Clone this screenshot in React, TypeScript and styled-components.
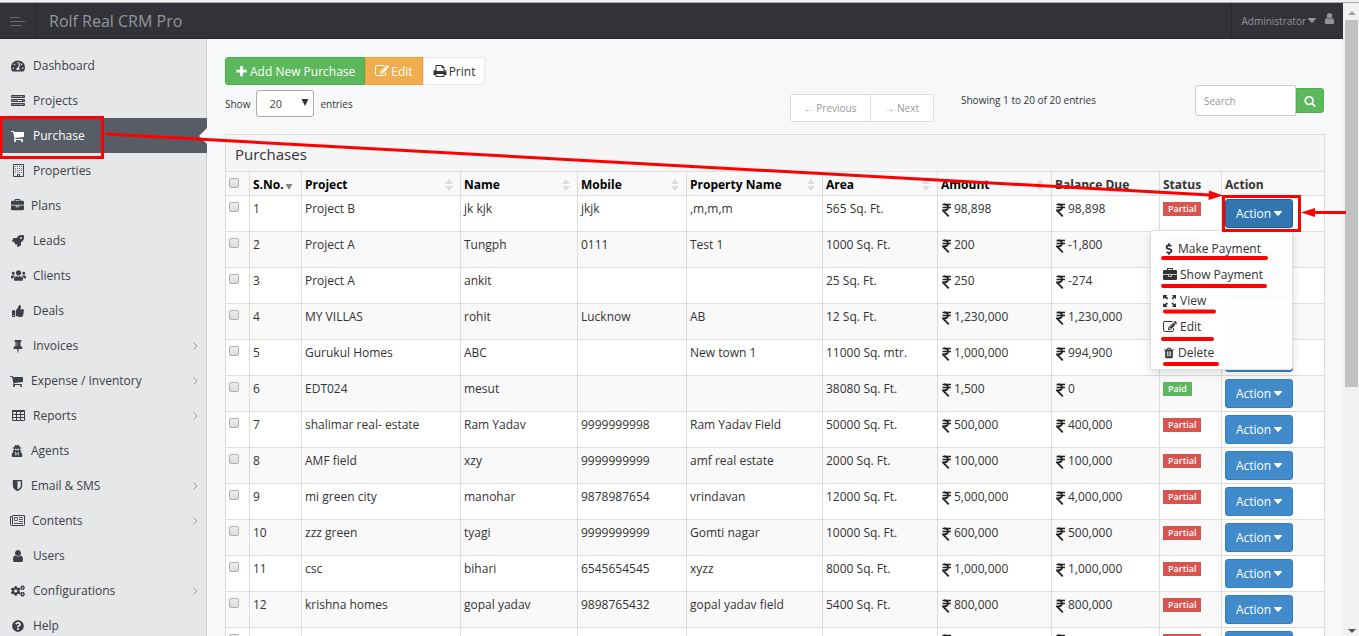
import React from "react";
import styled, { createGlobalStyle, css } from "styled-components";
import {
  FaRocket,
  FaUsers,
  FaThumbsUp,
  FaUserSecret,
  FaCogs,
  FaQuestionCircle,
  FaTachometerAlt,
  FaDollarSign,
} from "react-icons/fa";

const FONT = '"Open Sans", "Noto Sans", "Liberation Sans", sans-serif';

const GlobalStyle = createGlobalStyle`
  *, *::before, *::after { box-sizing: border-box; }
  body {
    margin: 0;
    overflow: hidden;
    background: #f7f8fa;
    color: #333;
    font-family: ${FONT};
    font-size: 12px;
    line-height: 18px;
  }
  button, input, select { font-family: inherit; font-size: inherit; }
  a { color: inherit; text-decoration: none; }
  svg { flex: none; }
`;

/* ---------- icons ---------- */

const PATHS = {
  cart: "M640 1536q0 52-38 90t-90 38-90-38-38-90 38-90 90-38 90 38 38 90zm896 0q0 52-38 90t-90 38-90-38-38-90 38-90 90-38 90 38 38 90zm128-1088v512q0 24-16.5 42.5t-40.5 21.5l-1044 122q13 60 13 70 0 16-24 64h920q26 0 45 19t19 45-19 45-45 19h-1024q-26 0-45-19t-19-45q0-11 8-31.5t16-36 21.5-40 15.5-29.5l-177-823h-204q-26 0-45-19t-19-45 19-45 45-19h256q16 0 28.5 6.5t19.5 15.5 13 24.5 8 26 5.5 29.5 4.5 26h1201q26 0 45 19t19 45z",
  user: "M1536 1399q0 109-62.5 187t-150.5 78h-854q-88 0-150.5-78t-62.5-187q0-85 8.5-160.5t31.5-152 58.5-131 94-89 134.5-34.5q131 128 313 128t313-128q76 0 134.5 34.5t94 89 58.5 131 31.5 152 8.5 160.5zm-256-887q0 159-112.5 271.5t-271.5 112.5-271.5-112.5-112.5-271.5 112.5-271.5 271.5-112.5 271.5 112.5 112.5 271.5z",
  plus: "M1600 736v192q0 40-28 68t-68 28h-416v416q0 40-28 68t-68 28h-192q-40 0-68-28t-28-68v-416h-416q-40 0-68-28t-28-68v-192q0-40 28-68t68-28h416v-416q0-40 28-68t68-28h192q40 0 68 28t28 68v416h416q40 0 68 28t28 68z",
  search: "M1216 832q0-185-131.5-316.5t-316.5-131.5-316.5 131.5-131.5 316.5 131.5 316.5 316.5 131.5 316.5-131.5 131.5-316.5zm512 832q0 52-38 90t-90 38q-54 0-90-38l-343-342q-179 124-399 124-143 0-273.5-55.5t-225-150-150-225-55.5-273.5 55.5-273.5 150-225 225-150 273.5-55.5 273.5 55.5 225 150 150 225 55.5 273.5q0 220-124 399l343 343q37 37 37 90z",
  edit: "M888 1184l116-116-152-152-116 116v56h96v96h56zm440-720q-16-16-33 1l-350 350q-17 17-1 33t33-1l350-350q17-17 1-33zm80 594v190q0 119-84.5 203.5t-203.5 84.5h-832q-119 0-203.5-84.5t-84.5-203.5v-832q0-119 84.5-203.5t203.5-84.5h832q63 0 117 25 15 7 18 23 3 17-9 29l-49 49q-14 14-32 8-23-6-45-6h-832q-66 0-113 47t-47 113v832q0 66 47 113t113 47h832q66 0 113-47t47-113v-126q0-13 9-22l64-64q15-15 35-7t20 29zm-96-738l288 288-672 672h-288v-288zm444 132l-92 92-288-288 92-92q28-28 68-28t68 28l152 152q28 28 28 68t-28 68z",
  print: "M448 1536h896v-256h-896v256zm0-640h896v-384h-160q-40 0-68-28t-28-68v-160h-640v640zm1152 64q0-26-19-45t-45-19-45 19-19 45 19 45 45 19 45-19 19-45zm128 0v416q0 13-9.5 22.5t-22.5 9.5h-224v160q0 40-28 68t-68 28h-960q-40 0-68-28t-28-68v-160h-224q-13 0-22.5-9.5t-9.5-22.5v-416q0-79 56.5-135.5t135.5-56.5h64v-544q0-40 28-68t68-28h672q40 0 88 20t76 48l152 152q28 28 48 76t20 88v256h64q79 0 135.5 56.5t56.5 135.5z",
  shield: "M1344 960v-640h-448v1137q119-63 213-137 235-184 235-360zm192-768v768q0 86-33.5 170.5t-83 150-118 127.5-126.5 103-121 77.5-89.5 49.5-42.5 20q-12 6-26 6t-26-6q-16-7-42.5-20t-89.5-49.5-121-77.5-126.5-103-118-127.5-83-150-33.5-170.5v-768q0-26 19-45t45-19h1152q26 0 45 19t19 45z",
  pin: "M800 864v-448q0-14-9-23t-23-9-23 9-9 23v448q0 14 9 23t23 9 23-9 9-23zm672 352q0 26-19 45t-45 19h-429l-51 483q-2 12-10.5 20.5t-20.5 8.5h-1q-27 0-32-27l-76-485h-404q-26 0-45-19t-19-45q0-123 78.5-221.5t177.5-98.5v-512q-52 0-90-38t-38-90 38-90 90-38h640q52 0 90 38t38 90-38 90-90 38v512q99 0 177.5 98.5t78.5 221.5z",
  briefcase: "M640 256h512v-128h-512v128zm1152 640v480q0 66-47 113t-113 47h-1472q-66 0-113-47t-47-113v-480h672v160q0 26 19 45t45 19h320q26 0 45-19t19-45v-160h672zm-768 0v128h-256v-128h256zm768-480v384h-1792v-384q0-66 47-113t113-47h352v-160q0-40 28-68t68-28h576q40 0 68 28t28 68v160h352q66 0 113 47t47 113z",
  trash: "M704 1376v-704q0-14-9-23t-23-9h-64q-14 0-23 9t-9 23v704q0 14 9 23t23 9h64q14 0 23-9t9-23zm256 0v-704q0-14-9-23t-23-9h-64q-14 0-23 9t-9 23v704q0 14 9 23t23 9h64q14 0 23-9t9-23zm256 0v-704q0-14-9-23t-23-9h-64q-14 0-23 9t-9 23v704q0 14 9 23t23 9h64q14 0 23-9t9-23zm-544-992h448l-48-117q-7-9-17-11h-317q-10 2-17 11zm928 32v64q0 14-9 23t-23 9h-96v948q0 83-47 143.5t-113 60.5h-832q-66 0-113-58.5t-47-141.5v-952h-96q-14 0-23-9t-9-23v-64q0-14 9-23t23-9h309l70-167q15-37 54-63t79-26h320q40 0 79 26t54 63l70 167h309q14 0 23 9t9 23z",
};

function Glyph({ name, size = 14 }: { name: keyof typeof PATHS; size?: number }) {
  return (
    <svg width={size} height={size} viewBox="0 0 1792 1792" fill="currentColor" aria-hidden="true">
      <path d={PATHS[name]} />
    </svg>
  );
}

const TableIcon = () => (
  <svg width="13" height="11" viewBox="0 0 13 11" fill="none" stroke="currentColor" aria-hidden="true">
    <path d="M.5.500h12v10H.5zM.5 1.500h12M4.500 1v9M8.500 1v9M0 4.500h13M0 7.500h13" />
  </svg>
);

const ServerIcon = () => (
  <svg width="14" height="12" viewBox="0 0 14 12" fill="none" stroke="currentColor" aria-hidden="true">
    <path d="M.5.500h13v2H.5zM.5 4.500h13v2H.5zM.5 8.500h13v2H.5z" />
    <path strokeOpacity=".5" d="M1 1.500h9M1 5.500h6M1 9.500h9" />
    <path strokeWidth="2" d="M11 1.500h1.500M11 5.500h1.500M11 9.500h1.500" />
  </svg>
);

const BuildingIcon = () => (
  <svg width="11" height="13" viewBox="0 0 11 13" fill="none" stroke="currentColor" aria-hidden="true">
    <path d="M.5.500h10v12H.5z" />
    <path strokeDasharray="1 1" strokeOpacity=".7" d="M2 2.500h7M2 4.500h7M2 6.500h7M2 8.500h7" />
    <path d="M4.500 12.500v-2h2v2" />
  </svg>
);

const NewspaperIcon = () => (
  <svg width="15" height="11" viewBox="0 0 15 11" fill="none" stroke="currentColor" aria-hidden="true">
    <path d="M2.500.500h12v9q0 1-1 1h-12q-1 0-1-1v-8h2v8" />
    <path d="M4.500 2.500h3v3h-3zM9 2.500h4M9 4.500h4M9 6.500h4M4 8.500h9" strokeOpacity=".85" />
  </svg>
);

const FullscreenIcon = () => (
  <svg width="14" height="14" viewBox="0 0 14 14" fill="currentColor" aria-hidden="true">
    <path d="M0 1h4.500L3.200 2.300 5.200 4.300 4 5.500 1.700 3.700 0 5.200zM13 1v4.200L11.600 3.800 9.600 5.500 8.500 4.400l1.800-2L9 1zM0 13V9l1.500 1.200L3.700 8.400 5 9.600 3.200 11.600 4.500 13zM13 13H9l1.300-1.400L8.400 9.600 9.600 8.400l2 1.800L13 9z" />
  </svg>
);

const Rupee = () => (
  <svg width="9" height="14" viewBox="0 0 9 14" fill="none" stroke="#222" aria-hidden="true">
    <path strokeWidth="1.600" d="M.5 1.500H9M.5 4.500H9" />
    <path strokeWidth="1.800" d="M2 1.500C7.500 1 7.500 7.800 1 7.500L6.800 13.300" />
  </svg>
);

const Caret = () => (
  <svg width="8" height="5" viewBox="0 0 8 5" fill="currentColor" aria-hidden="true">
    <path d="M0.500 0h7q.8.300.3 1L4.600 4.500q-.6.500-1.200 0L.2 1Q-.3.300.500 0z" />
  </svg>
);

const Chevron = () => (
  <svg width="5" height="8" viewBox="0 0 5 8" fill="none" stroke="#999" aria-hidden="true">
    <path d="M0.700 0.700 4 4 0.700 7.300" />
  </svg>
);

/* ---------- frame ---------- */

const Page = styled.div`
  position: relative;
  display: flex;
  flex-direction: column;
  height: 100vh;
  overflow: hidden;
`;

const TopEdge = styled.div`
  flex: none;
  height: 3px;
  background: #f1f1f1;
  border-bottom: 1px solid #aaa;
`;

const Frame = styled.div`
  display: flex;
  flex: 1;
  min-height: 0;
`;

const Shell = styled.div`
  display: flex;
  flex-direction: column;
  flex: 1;
  min-width: 0;
`;

const Header = styled.header`
  display: flex;
  flex: none;
  align-items: center;
  height: 36px;
  background: #323338;
  border-bottom: 1px solid #28282c;
  color: #949599;
`;

const MenuToggle = styled.button`
  width: 36px;
  height: 100%;
  padding: 2px 0 0;
  border: 0;
  border-right: 1px solid #27282b;
  background: none;
  color: #6b6c70;
`;

const Brand = styled.h1`
  flex: 1;
  margin: 0 0 0 13px;
  font-size: 16px;
  font-weight: 400;
`;

const Account = styled.a`
  display: flex;
  align-items: center;
  gap: 2px;
  height: 100%;
  padding: 0 7px 0 9px;
  border-left: 1px solid #27282b;
  font-size: 10px;
  > svg:last-child { margin: 0 0 4px 5px; }
`;

const Body = styled.div`
  display: flex;
  flex: 1;
  min-height: 0;
`;

const Scrollbar = styled.div`
  display: flex;
  flex: none;
  flex-direction: column;
  align-items: center;
  justify-content: space-between;
  width: 16px;
  padding: 8px 0 3px 1px;
  background: #f1f1f1;
`;

const Thumb = styled.div`
  flex: none;
  width: 13px;
  height: 59%;
  margin: 5px 0 auto;
  background: #c1c1c1;
`;

/* ---------- sidebar ---------- */

const Sidebar = styled.nav`
  flex: none;
  width: 207px;
  padding-top: 9px;
  background: #e5e7e9;
  box-shadow: inset -1px 0 #cccfd2;
`;

const NavLink = styled.a<{ $active?: boolean }>`
  display: flex;
  align-items: center;
  height: 35px;
  padding: 0 9px 0 10px;
  font-size: 12px;
  color: #3d4048;
  ${(p) =>
    p.$active &&
    css`
      padding-right: 0;
      background: #575d67;
      color: #fff;
    `}
`;

const NavIcon = styled.span<{ $width: number }>`
  display: flex;
  justify-content: center;
  width: ${(p) => p.$width}px;
  margin-right: 7px;
`;

const NavLabel = styled.span`
  flex: 1;
`;

type NavEntry = { label: string; icon: React.ReactNode; width?: number; sub?: boolean; active?: boolean };

const NAV: NavEntry[] = [
  { label: "Dashboard", icon: <FaTachometerAlt size={14} /> },
  { label: "Projects", icon: <ServerIcon /> },
  { label: "Purchase", icon: <Glyph name="cart" />, active: true },
  { label: "Properties", icon: <BuildingIcon /> },
  { label: "Plans", icon: <Glyph name="briefcase" size={13} />, width: 14 },
  { label: "Leads", icon: <FaRocket size={12} /> },
  { label: "Clients", icon: <FaUsers size={15} /> },
  { label: "Deals", icon: <FaThumbsUp size={12} /> },
  { label: "Invoices", icon: <Glyph name="pin" />, sub: true },
  { label: "Expense / Inventory", icon: <Glyph name="cart" />, width: 14, sub: true },
  { label: "Reports", icon: <TableIcon />, sub: true },
  { label: "Agents", icon: <FaUserSecret size={12} />, width: 14 },
  { label: "Email & SMS", icon: <Glyph name="shield" size={13} />, width: 14, sub: true },
  { label: "Contents", icon: <NewspaperIcon />, width: 15, sub: true },
  { label: "Users", icon: <Glyph name="user" /> },
  { label: "Configurations", icon: <FaCogs size={14} />, sub: true },
  { label: "Help", icon: <FaQuestionCircle size={12} /> },
];

/* ---------- content ---------- */

const Main = styled.main`
  flex: 1;
  min-width: 0;
  padding: 18px 18px 0;
`;

const Controls = styled.div`
  display: flex;
  justify-content: space-between;
  height: 77px;
`;

const ControlsLeft = styled.div`
  display: flex;
  flex-direction: column;
  gap: 5px;
`;

const ButtonGroup = styled.div`
  display: flex;
`;

const ToolButton = styled.button<{ $bg: string; $border: string; $color?: string }>`
  display: flex;
  align-items: center;
  gap: 2px;
  height: 28px;
  padding: 0 9px;
  border: 1px solid ${(p) => p.$border};
  background: ${(p) => p.$bg};
  color: ${(p) => p.$color ?? "#fff"};
  font-size: 12px;
  white-space: nowrap;
  &:first-child { border-radius: 3px 0 0 3px; }
  &:last-child { border-radius: 0 3px 3px 0; }
`;

const LengthLabel = styled.label`
  display: flex;
  align-items: center;
  gap: 6px;
  font-size: 10px;
`;

const SelectWrap = styled.span`
  position: relative;
  display: flex;
  svg { position: absolute; right: 5px; top: 9px; pointer-events: none; }
`;

const LengthSelect = styled.select`
  appearance: none;
  width: 58px;
  height: 27px;
  padding: 0 12px;
  border: 1px solid #aaa;
  border-radius: 3px;
  background: #fff;
  color: #444;
  font-size: 11px;
`;

const ControlsRight = styled.div`
  display: flex;
  align-items: flex-start;
  margin: 28px 1px 0 0;
`;

const Pager = styled.div`
  display: flex;
  margin: 9px 27px 0 0;
`;

const PagerButton = styled.button`
  height: 28px;
  padding: 0 14px 0 13px;
  border: 1px solid #ddd;
  background: #fff;
  color: #999;
  font-size: 10px;
  &:first-child { border-radius: 3px 0 0 3px; }
  &:last-child { margin-left: -1px; border-radius: 0 3px 3px 0; }
`;

const Info = styled.p`
  width: 234px;
  margin: 6px 0 0;
  font-size: 10px;
`;

const SearchForm = styled.form`
  display: flex;
  align-items: center;
`;

const SearchInput = styled.input`
  width: 101px;
  height: 31px;
  padding: 0 8px;
  border: 1px solid #ccc;
  border-radius: 3px 0 0 3px;
  background: #fff;
  font-size: 10px;
  &::placeholder { color: #999; }
`;

const SearchButton = styled.button`
  display: flex;
  align-items: center;
  justify-content: center;
  width: 28px;
  height: 25px;
  padding: 0;
  border: 1px solid #4cae4c;
  border-radius: 0 3px 3px 0;
  background: #5cb85c;
  color: #fff;
`;

const PanelTitle = styled.h2`
  height: 37px;
  margin: 0;
  padding: 0 9px;
  border: 1px solid #ddd;
  border-bottom: 0;
  background: #f5f5f5;
  font-size: 15px;
  font-weight: 400;
  line-height: 38px;
`;

const Table = styled.table`
  width: 100%;
  border-collapse: collapse;
  table-layout: fixed;
`;

const Th = styled.th<{ $plain?: boolean }>`
  height: 24px;
  padding: 2px 7px 0 3px;
  border: 1px solid #ddd;
  background: #f9f9f9;
  color: ${(p) => (p.$plain ? "#333" : "#000")};
  font-size: 12px;
  font-weight: 700;
  text-align: left;
  white-space: nowrap;
`;

const ThInner = styled.span<{ $spread?: boolean }>`
  display: flex;
  align-items: center;
  justify-content: ${(p) => (p.$spread ? "space-between" : "flex-start")};
  gap: 1px;
`;

const Row = styled.tr`
  height: 36px;
  background: #fff;
  &:nth-child(even) { background: #f9f9f9; }
`;

const Td = styled.td`
  padding: 4px 3px 0;
  border: 1px solid #ddd;
  vertical-align: top;
  white-space: nowrap;
`;

const CheckTd = styled(Td)`
  padding-top: 6px;
  line-height: 10px;
`;

const ActionTd = styled(Td)`
  padding: 3px;
`;

const Check = styled.input`
  appearance: none;
  display: block;
  width: 10px;
  height: 10px;
  margin: 0;
  border: 1px solid #b0b0b0;
  border-radius: 2px;
  background: linear-gradient(#eee, #dcdcdc);
`;

const HeadCheck = styled(Check)`
  margin-bottom: 4px;
`;

const Money = styled.span`
  display: flex;
  align-items: center;
  gap: 3px;
  padding-left: 1px;
  svg { margin-top: 2px; }
`;

const Badge = styled.span<{ $paid: boolean }>`
  display: block;
  width: fit-content;
  height: 14px;
  margin-top: 2px;
  padding: 0 5px;
  background: ${(p) => (p.$paid ? "#5cb85c" : "#d9534f")};
  color: #fff;
  font-size: 9px;
  font-weight: 600;
  line-height: 14px;
`;

const ActionWrap = styled.div`
  position: relative;
  width: 68px;
`;

const ActionButton = styled.button<{ $open?: boolean }>`
  display: flex;
  align-items: center;
  justify-content: center;
  gap: 3px;
  width: 68px;
  height: 29px;
  padding: 0 0 1px;
  border: 1px solid ${(p) => (p.$open ? "#285e8e" : "#357ebd")};
  border-radius: 3px;
  background: ${(p) => (p.$open ? "#3276b1" : "#428bca")};
  color: #fff;
  font-size: 12px;
`;

const Menu = styled.ul`
  position: absolute;
  z-index: 2;
  top: 31px;
  right: 0;
  width: 143px;
  margin: 0;
  padding: 5px 0 3px;
  border: 1px solid #ddd;
  border-radius: 3px;
  background: rgba(255, 255, 255, 0.98);
  box-shadow: 0 3px 8px rgba(0, 0, 0, 0.15);
  list-style: none;
`;

const MenuItem = styled.a`
  display: flex;
  align-items: center;
  gap: 3px;
  height: 26px;
  padding: 0 12px;
  font-size: 12px;
`;

const Annotations = styled.svg`
  position: absolute;
  z-index: 5;
  top: 0;
  left: 0;
  pointer-events: none;
`;

type Purchase = [string, string, string, string, string, string, string, "Partial" | "Paid"];

const ROWS: Purchase[] = [
  ["Project B", "jk kjk", "jkjk", ",m,m,m", "565 Sq. Ft.", "98,898", "98,898", "Partial"],
  ["Project A", "Tungph", "0111", "Test 1", "1000 Sq. Ft.", "200", "-1,800", "Partial"],
  ["Project A", "ankit", "", "", "25 Sq. Ft.", "250", "-274", "Partial"],
  ["MY VILLAS", "rohit", "Lucknow", "AB", "12 Sq. Ft.", "1,230,000", "1,230,000", "Partial"],
  ["Gurukul Homes", "ABC", "", "New town 1", "11000 Sq. mtr.", "1,000,000", "994,900", "Partial"],
  ["EDT024", "mesut", "", "", "38080 Sq. Ft.", "1,500", "0", "Paid"],
  ["shalimar real- estate", "Ram Yadav", "9999999998", "Ram Yadav Field", "50000 Sq. Ft.", "500,000", "400,000", "Partial"],
  ["AMF field", "xzy", "9999999999", "amf real estate", "2000 Sq. Ft.", "100,000", "100,000", "Partial"],
  ["mi green city", "manohar", "9878987654", "vrindavan", "12000 Sq. Ft.", "5,000,000", "4,000,000", "Partial"],
  ["zzz green", "tyagi", "9999999999", "Gomti nagar", "10000 Sq. Ft.", "600,000", "500,000", "Partial"],
  ["csc", "bihari", "6545654545", "xyzz", "8000 Sq. Ft.", "1,000,000", "1,000,000", "Partial"],
  ["krishna homes", "gopal yadav", "9898765432", "gopal yadav field", "5400 Sq. Ft.", "800,000", "800,000", "Partial"],
  ["", "", "", "", "", "", "", "Partial"],
];

const HEADINGS = ["Project", "Name", "Mobile", "Property Name", "Area", "Amount"];
const WIDTHS = [24, 52, 0, 117, 109, 136, 115, 114, 108, 62, 103];

const SortIcon = () => (
  <svg width="8" height="12" viewBox="0 0 8 12" fill="#ddd" aria-hidden="true">
    <path d="M4 0l4 5H0zM4 12L0 7h8z" />
  </svg>
);

function ActionMenu() {
  return (
    <Menu>
      <li><MenuItem href="#pay"><FaDollarSign size={12} />Make Payment</MenuItem></li>
      <li><MenuItem href="#payments"><Glyph name="briefcase" />Show Payment</MenuItem></li>
      <li><MenuItem href="#view"><FullscreenIcon />View</MenuItem></li>
      <li><MenuItem href="#edit"><Glyph name="edit" />Edit</MenuItem></li>
      <li><MenuItem href="#delete"><Glyph name="trash" size={12} />Delete</MenuItem></li>
    </Menu>
  );
}

export default function App() {
  return (
    <Page>
      <GlobalStyle />
      <TopEdge />
      <Frame>
        <Shell>
          <Header>
            <MenuToggle aria-label="Toggle menu">
              <svg width="15" height="9" viewBox="0 0 15 9" stroke="currentColor" aria-hidden="true">
                <path d="M0 .5h10M0 4.500h15M0 8.500h12" />
              </svg>
            </MenuToggle>
            <Brand>Rolf Real CRM Pro</Brand>
            <Account href="#account">
              Administrator
              <Caret />
              <Glyph name="user" size={13} />
            </Account>
          </Header>
          <Body>
            <Sidebar>
              {NAV.map((n) => (
                <NavLink key={n.label} href="#nav" $active={n.active}>
                  <NavIcon $width={n.width ?? 16}>{n.icon}</NavIcon>
                  <NavLabel>{n.label}</NavLabel>
                  {n.sub && <Chevron />}
                  {n.active && (
                    <svg width="8" height="16" viewBox="0 0 8 16" fill="#f7f8fa" aria-hidden="true">
                      <path d="M8 0v16L0 8z" />
                    </svg>
                  )}
                </NavLink>
              ))}
            </Sidebar>
            <Main>
              <Controls>
                <ControlsLeft>
                  <ButtonGroup>
                    <ToolButton $bg="#5cb85c" $border="#4cae4c"><Glyph name="plus" size={13} />Add New Purchase</ToolButton>
                    <ToolButton $bg="#f0ad4e" $border="#eea236"><Glyph name="edit" />Edit</ToolButton>
                    <ToolButton $bg="#fff" $border="#e8e8e8" $color="#333"><Glyph name="print" />Print</ToolButton>
                  </ButtonGroup>
                  <LengthLabel>
                    Show
                    <SelectWrap>
                      <LengthSelect defaultValue="20">
                        <option>20</option>
                        <option>50</option>
                      </LengthSelect>
                      <svg width="8" height="7" viewBox="0 0 8 7" fill="#333" aria-hidden="true"><path d="M0.500 0h7L4 7z" /></svg>
                    </SelectWrap>
                    entries
                  </LengthLabel>
                </ControlsLeft>
                <ControlsRight>
                  <Pager>
                    <PagerButton>← Previous</PagerButton>
                    <PagerButton>→ Next</PagerButton>
                  </Pager>
                  <Info>Showing 1 to 20 of 20 entries</Info>
                  <SearchForm>
                    <SearchInput placeholder="Search" aria-label="Search" />
                    <SearchButton type="button" aria-label="Search"><Glyph name="search" size={12} /></SearchButton>
                  </SearchForm>
                </ControlsRight>
              </Controls>
              <PanelTitle>Purchases</PanelTitle>
              <Table>
                <colgroup>
                  {WIDTHS.map((w, i) => (
                    <col key={i} width={w || undefined} />
                  ))}
                </colgroup>
                <thead>
                  <tr>
                    <Th><HeadCheck type="checkbox" aria-label="Select all" /></Th>
                    <Th>
                      <ThInner>
                        S.No.
                        <svg width="8" height="10" viewBox="0 0 8 10" fill="#888" aria-hidden="true"><path d="M0.500 4h7L4 10z" /></svg>
                      </ThInner>
                    </Th>
                    {HEADINGS.map((h) => (
                      <Th key={h}><ThInner $spread>{h}<SortIcon /></ThInner></Th>
                    ))}
                    <Th $plain>Balance Due</Th>
                    <Th $plain>Status</Th>
                    <Th $plain>Action</Th>
                  </tr>
                </thead>
                <tbody>
                  {ROWS.map((r, i) => (
                    <Row key={i}>
                      <CheckTd><Check type="checkbox" aria-label={`Select purchase ${i + 1}`} /></CheckTd>
                      <Td>{i + 1}</Td>
                      {r.slice(0, 5).map((v, j) => (
                        <Td key={j}>{v}</Td>
                      ))}
                      <Td><Money><Rupee />{r[5]}</Money></Td>
                      <Td><Money><Rupee />{r[6]}</Money></Td>
                      <Td><Badge $paid={r[7] === "Paid"}>{r[7]}</Badge></Td>
                      <ActionTd>
                        <ActionWrap>
                          <ActionButton $open={i === 0}>Action<Caret /></ActionButton>
                          {i === 0 && <ActionMenu />}
                        </ActionWrap>
                      </ActionTd>
                    </Row>
                  ))}
                </tbody>
              </Table>
            </Main>
          </Body>
        </Shell>
        <Scrollbar>
          <svg width="8" height="4" viewBox="0 0 8 4" fill="#a0a0a0" aria-hidden="true"><path d="M4 0l4 4H0z" /></svg>
          <Thumb />
          <svg width="8" height="4" viewBox="0 0 8 4" fill="#505050" aria-hidden="true"><path d="M0 0h8L4 4z" /></svg>
        </Scrollbar>
      </Frame>
      <Annotations width="1359" height="636" viewBox="0 0 1359 636" fill="none" stroke="#f00" strokeWidth="3" aria-hidden="true">
        <rect x="1" y="117.500" width="101.500" height="40" />
        <rect x="1223.500" y="196.500" width="76" height="34" />
        <path d="M105 134L1210 195M1312 212.500h34" />
        <path stroke="none" fill="#f00" d="M1223 195.500l-14.500 4.500.5-9.500zM1301 212.500l14-4.500v9z" />
        <path
          strokeWidth="4"
          strokeLinecap="round"
          d="M1163 258h103M1163 286h102M1165 311.500h49M1163 339h49M1165 364h52"
        />
      </Annotations>
    </Page>
  );
}
